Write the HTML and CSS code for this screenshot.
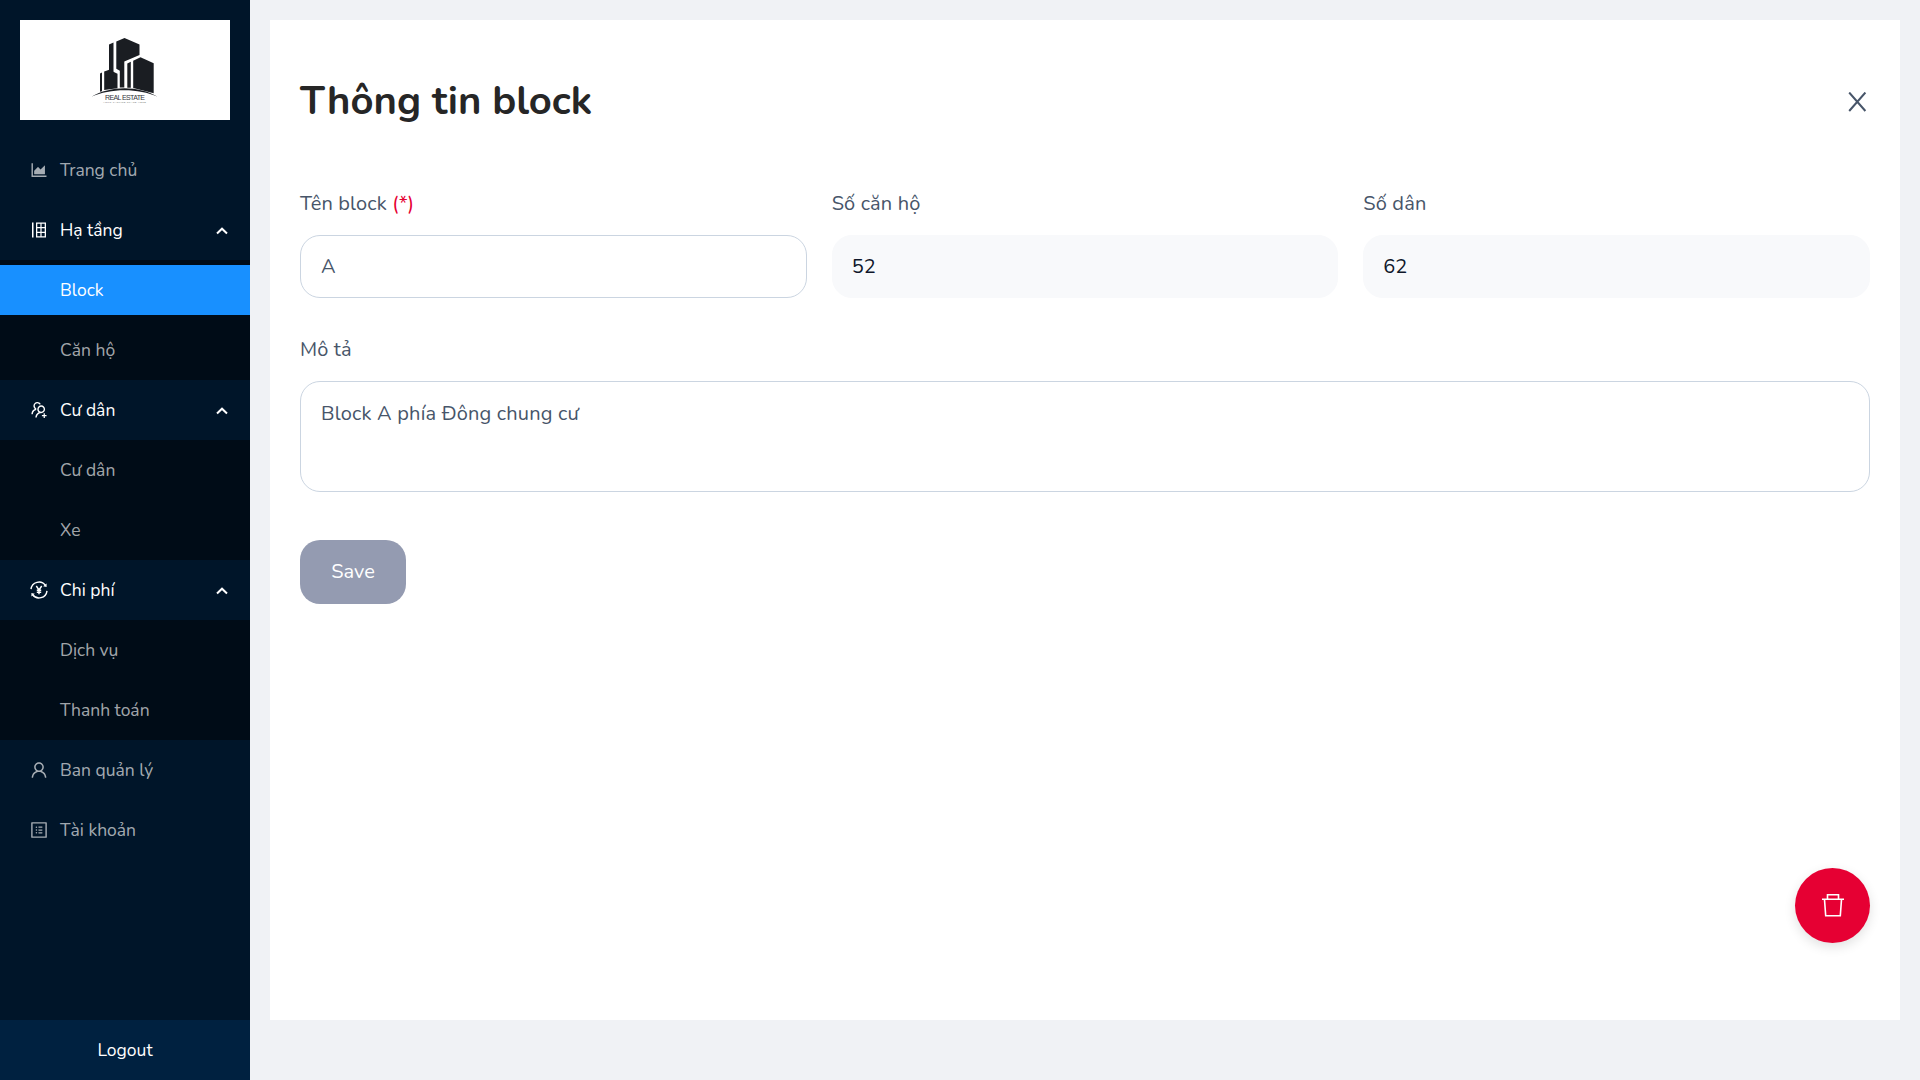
FILE: index.html
```
<!DOCTYPE html>
<html lang="vi">
<head>
<meta charset="utf-8">
<title>Thông tin block</title>
<link rel="stylesheet" href="styles.css">
</head>
<body>
<div class="layout">
  <aside class="sidebar">
    <div class="logo">
      <svg class="logo-mark" viewBox="0 0 70 70">
        <g fill="#1a1d22">
          <path d="M10 8.600l4.500-2v29.800l-4.500-1.500z"/>
          <path d="M17.300 5.500L25.500 2l15 6.500v10.600L25.300 25.500v26H20.800V34.800l-3.500-2z"/>
          <path d="M1 37.500l2-.9v18.600l-2 .5z"/>
          <path d="M5.200 35.600L10.200 33.700l8.300 4v14.500L5.200 54z"/>
          <path d="M28.300 27.500l3.500-1.700v26h-3.500z"/>
          <path d="M34.200 24.800L41.500 21.200l13.200 6v30L34.200 52z"/>
          <path d="M-7.500 60.800C11 49.300 40 49.300 58.500 60.800C40 52 11 52-7.500 60.800z"/>
        </g>
        <text class="logo-name" x="6" y="64" textLength="40">REAL ESTATE</text>
        <text class="logo-tag" x="4" y="67.300" textLength="43">YOUR TAGLINE SPACE HERE</text>
      </svg>
    </div>
    <nav class="menu">
      <a class="item"><svg class="icon" viewBox="0 0 1024 1024"><path d="M888 792H200V168c0-4.400-3.600-8-8-8h-56c-4.400 0-8 3.600-8 8v688c0 4.400 3.600 8 8 8h752c4.400 0 8-3.600 8-8v-56c0-4.400-3.600-8-8-8zm-616-64h536c4.400 0 8-3.600 8-8V284c0-7.200-8.700-10.700-13.700-5.700L592 488.600l-125.400-124a8.030 8.030 0 00-11.300 0l-189 189.600a7.870 7.870 0 00-2.300 5.600V720c0 4.400 3.600 8 8 8z"/></svg><span>Trang chủ</span></a>
      <a class="item open"><svg class="icon" viewBox="0 0 20 20"><path d="M3 2.500h1.500v15H3zM7 2.500h10v15H7z M8.300 3.800v3.300h3.100V3.800zm4.300 0v3.300h3.100V3.800zM8.300 8.300v3.400h3.100V8.300zm4.300 0v3.400h3.100V8.300zM8.300 12.900v3.300h3.100v-3.300zm4.300 0v3.300h3.100v-3.300z" fill-rule="evenodd"/></svg><span>Hạ tầng</span><svg class="chevron" viewBox="0 0 12 8"><path d="M1 6.500L6 1.700l5 4.800"/></svg></a>
      <div class="submenu">
        <a class="item active"><span>Block</span></a>
        <a class="item"><span>Căn hộ</span></a>
      </div>
      <a class="item open"><svg class="icon" viewBox="0 0 1024 1024"><path d="M892 772h-80v-80c0-4.400-3.600-8-8-8h-48c-4.400 0-8 3.600-8 8v80h-80c-4.400 0-8 3.600-8 8v48c0 4.400 3.600 8 8 8h80v80c0 4.400 3.600 8 8 8h48c4.400 0 8-3.600 8-8v-80h80c4.400 0 8-3.600 8-8v-48c0-4.400-3.600-8-8-8zM373.500 498.400c-.9-8.700-1.400-17.500-1.400-26.400 0-15.900 1.500-31.400 4.300-46.500.7-3.600-1.200-7.300-4.500-8.800-13.600-6.100-26.100-14.500-36.900-25.100a127.540 127.540 0 01-38.700-95.400c.9-32.100 13.800-62.600 36.300-85.600 24.700-25.300 57.900-39.100 93.200-38.700 31.900.3 62.700 12.600 86 34.400 7.900 7.400 14.700 15.600 20.400 24.400 2 3.100 5.900 4.400 9.300 3.200 17.600-6.100 36.200-10.400 55.300-12.400 5.600-.6 8.800-6.600 6.300-11.600-32.500-64.300-98.900-108.700-175.700-109.900-110.800-1.700-203.200 89.200-203.200 200 0 62.800 28.900 118.800 74.200 155.500-31.800 14.700-61.100 35-86.500 60.400-54.800 54.700-85.800 126.900-87.800 204a8 8 0 008 8.200h56.100c4.300 0 7.900-3.400 8-7.700 1.900-58 25.400-112.300 66.700-153.500 29.400-29.400 65.400-49.800 104.700-59.700 3.900-1 6.500-4.700 6-8.700zM824 472c0-109.400-87.900-198.300-196.900-200C516.300 270.300 424 361.200 424 472c0 62.800 29 118.800 74.200 155.500a300.950 300.950 0 00-86.400 60.400C357 742.600 326 814.800 324 891.800a8 8 0 008 8.200h56c4.300 0 7.900-3.400 8-7.700 1.900-58 25.400-112.300 66.700-153.500C505.800 695.700 563 672 624 672c110.400 0 200-89.500 200-200zm-109.500 90.500C690.300 586.700 658.200 600 624 600s-66.300-13.300-90.500-37.500a127.260 127.260 0 01-37.500-91.800c.3-32.800 13.400-64.500 36.300-88 24-24.600 56.100-38.300 90.400-38.700 33.900-.3 66.800 12.900 91 36.600 24.800 24.300 38.400 56.800 38.400 91.400-.1 34.200-13.400 66.300-37.600 90.500z"/></svg><span>Cư dân</span><svg class="chevron" viewBox="0 0 12 8"><path d="M1 6.500L6 1.700l5 4.800"/></svg></a>
      <div class="submenu">
        <a class="item"><span>Cư dân</span></a>
        <a class="item"><span>Xe</span></a>
      </div>
      <a class="item open"><svg class="icon line" viewBox="0 0 20 20"><path d="M2 9.200A8 8 0 0116.500 5.500M18 10.800A8 8 0 013.500 14.500"/><path d="M17.600 3.400v3.500l-3.400-.6zM2.400 16.600v-3.500l3.400.6z" fill="currentColor" stroke="none"/><path d="M7.300 6l2.700 4 2.700-4M10 10v4.200M7.800 10.300h4.400M7.800 12.300h4.400"/></svg><span>Chi phí</span><svg class="chevron" viewBox="0 0 12 8"><path d="M1 6.500L6 1.700l5 4.800"/></svg></a>
      <div class="submenu">
        <a class="item"><span>Dịch vụ</span></a>
        <a class="item"><span>Thanh toán</span></a>
      </div>
      <a class="item"><svg class="icon" viewBox="0 0 1024 1024"><path d="M858.500 763.600a374 374 0 00-80.600-119.500 375.630 375.630 0 00-119.500-80.600c-.4-.2-.8-.3-1.200-.5C719.500 518 760 444.700 760 362c0-137-111-248-248-248S264 225 264 362c0 82.700 40.500 156 102.800 201.100-.4.200-.8.300-1.200.5-44.800 18.900-85 46-119.500 80.600a375.630 375.630 0 00-80.600 119.500A371.700 371.700 0 00136 901.800a8 8 0 008 8.200h60c4.400 0 7.900-3.500 8-7.800 2-77.200 33-149.500 87.800-204.300 56.700-56.700 132-87.900 212.200-87.900s155.500 31.200 212.200 87.900C779 752.700 810 825 812 902.200c.1 4.400 3.600 7.800 8 7.800h60a8 8 0 008-8.200c-1-47.800-10.900-94.300-29.500-138.200zM512 534c-45.900 0-89.100-17.900-121.600-50.400S340 407.900 340 362c0-45.900 17.900-89.100 50.400-121.600S466.100 190 512 190s89.100 17.900 121.600 50.400S684 316.100 684 362c0 45.900-17.900 89.100-50.400 121.600S557.900 534 512 534z"/></svg><span>Ban quản lý</span></a>
      <a class="item"><svg class="icon" viewBox="0 0 1024 1024"><path d="M880 112H144c-17.700 0-32 14.300-32 32v736c0 17.700 14.300 32 32 32h736c17.700 0 32-14.300 32-32V144c0-17.700-14.300-32-32-32zm-40 728H184V184h656v656zM492 400h184c4.400 0 8-3.600 8-8v-48c0-4.400-3.600-8-8-8H492c-4.400 0-8 3.600-8 8v48c0 4.400 3.600 8 8 8zm0 144h184c4.400 0 8-3.600 8-8v-48c0-4.400-3.600-8-8-8H492c-4.400 0-8 3.600-8 8v48c0 4.400 3.600 8 8 8zm0 144h184c4.400 0 8-3.600 8-8v-48c0-4.400-3.600-8-8-8H492c-4.400 0-8 3.600-8 8v48c0 4.400 3.600 8 8 8zM340 368a40 40 0 1080 0 40 40 0 10-80 0zm0 144a40 40 0 1080 0 40 40 0 10-80 0zm0 144a40 40 0 1080 0 40 40 0 10-80 0z"/></svg><span>Tài khoản</span></a>
    </nav>
    <button class="logout">Logout</button>
  </aside>
  <main class="content">
    <section class="panel">
      <header class="panel-head">
        <h1>Thông tin block</h1>
        <svg class="close" viewBox="0 0 19 20"><path d="M1.200.5l16.200 18.500M17.400.5L1.200 19"/></svg>
      </header>
      <div class="fields">
        <div class="field"><label>Tên block <em>(*)</em></label><div class="box">A</div></div>
        <div class="field"><label>Số căn hộ</label><div class="box readonly">52</div></div>
        <div class="field"><label>Số dân</label><div class="box readonly">62</div></div>
      </div>
      <div class="field description"><label>Mô tả</label><div class="box area">Block A phía Đông chung cư</div></div>
      <button class="save">Save</button>
      <button class="delete"><svg viewBox="0 0 24 24"><path d="M1 6.200h22M6.500 5.500V1.700h11v3.800M3.500 6.500l1.200 16.300h14.600l1.200-16.300"/></svg></button>
    </section>
  </main>
</div>
</body>
</html>
```
FILE: styles.css
```
* { box-sizing: border-box; }
body { margin: 0; font-family: Nunito, Lato, sans-serif; font-size: 20px; color: #475569; }
button { border: 0; padding: 0; font: inherit; color: #fff; }
.layout { display: flex; height: 1080px; background: #f0f2f5; }
.sidebar { width: 250px; display: flex; flex-direction: column; background: #001529; }
.logo { height: 100px; margin: 20px; background: #fff; }
.logo-mark { display: block; width: 70px; height: 70px; margin: 16px 0 0 79px; overflow: visible; }
.logo-name { font: 7px "Liberation Sans", sans-serif; fill: #33363b; }
.logo-tag { font: 2.500px "Liberation Sans", sans-serif; fill: #777; }
.menu { flex: 1; display: flex; flex-direction: column; }
.item { display: flex; align-items: center; height: 50px; margin: 5px 0; padding: 0 22px 0 29px; gap: 11px; font-size: 17.500px; color: rgba(255, 255, 255, .65); }
.item.open { color: #fff; }
.item.active { color: #fff; background: #1890ff; }
.submenu { display: flex; flex-direction: column; background: #000c17; }
.submenu .item { padding-left: 60px; }
.icon { width: 20px; height: 20px; fill: currentColor; }
.icon.line { fill: none; stroke: currentColor; stroke-width: 1.400; }
.chevron { width: 12px; height: 8px; margin: 1px 0 0 auto; fill: none; stroke: #fff; stroke-width: 2; }
.logout { height: 60px; background: #002140; font-size: 17.500px; }
.content { flex: 1; padding: 20px 20px 60px; }
.panel { position: relative; height: 1000px; padding: 50px 30px; background: #fff; }
.panel-head { display: flex; justify-content: space-between; align-items: center; height: 62px; }
h1 { margin: 0; font-size: 40px; line-height: 1; font-weight: 700; color: #262626; }
.close { width: 19px; height: 20px; margin: 1px 3px 0 0; fill: none; stroke: #475569; stroke-width: 2; }
.fields { display: grid; grid-template-columns: repeat(3, 1fr); gap: 25px; margin-top: 56px; }
label { display: block; height: 47px; line-height: 32px; letter-spacing: .15px; }
em { font-style: normal; color: #e60033; }
.box { height: 63px; padding: 0 20px; border: 1px solid #cbd5e1; border-radius: 20px; line-height: 61px; }
.readonly { padding: 0 19px; border-color: #f8f9fb; background: #f8f9fb; color: #0f172a; }
.description { margin-top: 36px; }
.area { height: 111px; padding-top: 17px; line-height: 30px; letter-spacing: .2px; }
.save { display: block; width: 106px; height: 64px; margin-top: 48px; padding-bottom: 2px; border-radius: 20px; background: #949bb1; }
.delete { position: absolute; right: 30px; bottom: 77px; width: 75px; height: 75px; display: grid; place-items: center; border-radius: 50%; background: #e60033; box-shadow: 0 4px 12px rgba(0, 0, 0, .12); }
.delete svg { width: 24px; height: 24px; margin-bottom: 2px; fill: none; stroke: #fff; stroke-width: 1.600; }
```
